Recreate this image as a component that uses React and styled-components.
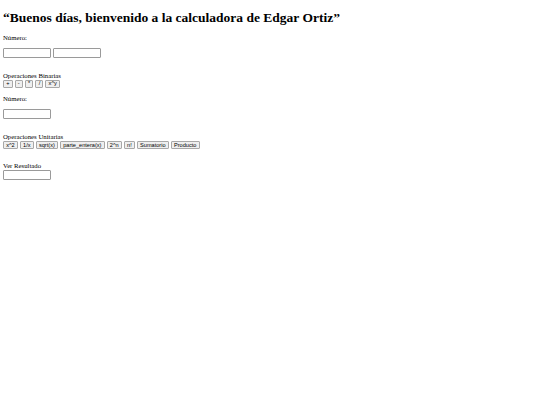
import React from "react";
import styled, { createGlobalStyle } from "styled-components";

const GlobalStyle = createGlobalStyle`
  html, body {
    margin: 0;
    padding: 0;
    background: #ffffff;
  }
  body {
    padding: 3px;
    font-family: "Liberation Serif", "Times New Roman", serif;
    font-size: 6.75px;
    color: #000000;
  }
`;

const Page = styled.div`
  display: flex;
  flex-direction: column;
  align-items: flex-start;
`;

const Title = styled.h1`
  font-size: 13.5px;
  font-weight: bold;
  margin: 6.5px 0 9px 0;
  line-height: 15px;
`;

const Label = styled.div`
  line-height: 8px;
  margin-top: ${(p) => p.$top || 0}px;
`;

const Row = styled.div`
  display: flex;
  gap: 2px;
  margin-top: ${(p) => p.$top || 0}px;
`;

const Field = styled.input`
  box-sizing: border-box;
  width: 48px;
  height: 10px;
  margin: 0;
  padding: 0 1px;
  border: 1px solid #9a9a9a;
  border-radius: 1px;
  background: #ffffff;
  font-size: 5.6px;
  outline: none;
`;

const OpButton = styled.button`
  box-sizing: border-box;
  height: 8px;
  margin: 0;
  padding: 0 2.2px;
  border: 1px solid #a8a8a8;
  border-radius: 1px;
  background: #efefef;
  color: #000000;
  font-family: "Liberation Sans", Arial, sans-serif;
  font-size: 5.6px;
  line-height: 5px;
  cursor: pointer;
`;

const binarias = ["+", "-", "*", "/", "x^y"];
const unitarias = [
  "x^2",
  "1/x",
  "sqrt(x)",
  "parte_entera(x)",
  "2^n",
  "n!",
  "Sumatorio",
  "Producto",
];

export default function App() {
  return (
    <Page>
      <GlobalStyle />
      <Title>“Buenos días, bienvenido a la calculadora de Edgar Ortiz”</Title>
      <Label>Número:</Label>
      <Row $top={6}>
        <Field type="text" />
        <Field type="text" />
      </Row>
      <Label $top={14}>Operaciones Binarias</Label>
      <Row $top={0}>
        {binarias.map((op) => (
          <OpButton key={op}>{op}</OpButton>
        ))}
      </Row>
      <Label $top={7.5}>Número:</Label>
      <Row $top={6}>
        <Field type="text" />
      </Row>
      <Label $top={14}>Operaciones Unitarias</Label>
      <Row $top={0}>
        {unitarias.map((op) => (
          <OpButton key={op}>{op}</OpButton>
        ))}
      </Row>
      <Label $top={12.5}>Ver Resultado</Label>
      <Row $top={0}>
        <Field type="text" />
      </Row>
    </Page>
  );
}
